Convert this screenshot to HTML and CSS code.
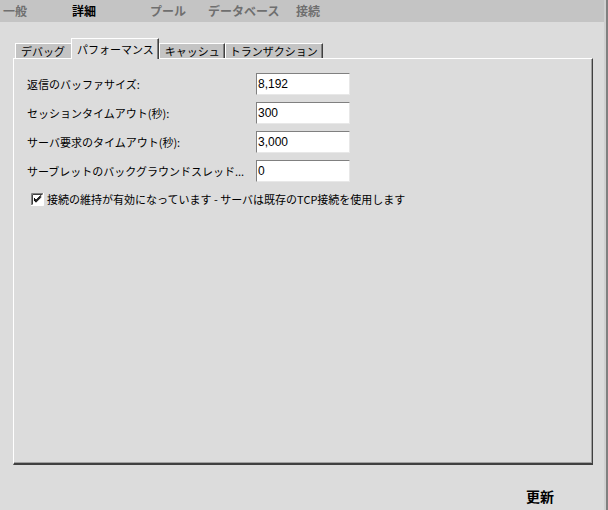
FILE: index.html
```html
<!DOCTYPE html>
<html lang="ja">
<head>
<meta charset="utf-8">
<link rel="stylesheet" href="styles.css">
</head>
<body>
<div class="window">
  <div class="main">
    <div class="topbar">
      <span class="top-item">一般</span>
      <span class="top-item active">詳細</span>
      <span class="top-item">プール</span>
      <span class="top-item">データベース</span>
      <span class="top-item">接続</span>
    </div>
    <div class="content">
      <div class="tabs">
        <div class="tab first">デバッグ</div>
        <div class="tab selected">パフォーマンス</div>
        <div class="tab">キャッシュ</div>
        <div class="tab last">トランザクション</div>
      </div>
      <div class="panel">
        <div class="form">
          <label class="label">返信のバッファサイズ:</label>
          <div class="input">8,192</div>
          <label class="label">セッションタイムアウト(秒):</label>
          <div class="input">300</div>
          <label class="label">サーバ要求のタイムアウト(秒):</label>
          <div class="input">3,000</div>
          <label class="label">サーブレットのバックグラウンドスレッド...</label>
          <div class="input">0</div>
        </div>
        <div class="check-row">
          <span class="checkbox">
            <svg width="13" height="13" viewBox="0 0 13 13">
              <rect x="0.5" y="0.5" width="12" height="12" fill="#fff" stroke="none"/>
              <path d="M0.5 12.5 V0.5 H12.5" fill="none" stroke="#808080"/>
              <path d="M1.5 11.5 V1.5 H11.5" fill="none" stroke="#404040"/>
              <path d="M12.5 0 V12.5 H0" fill="none" stroke="#ffffff"/>
              <path d="M3 6 L5 8.2 L10 3.2 M3 7 L5 9.2 L10 4.2 M3 5 L5 7.2 L10 2.2" fill="none" stroke="#000" stroke-width="1"/>
            </svg>
          </span>
          <span class="check-label">接続の維持が有効になっています - サーバは既存のTCP接続を使用します</span>
        </div>
      </div>
      <div class="footer">
        <span class="update">更新</span>
      </div>
    </div>
  </div>
  <div class="edge"></div>
</div>
</body>
</html>
```

FILE: styles.css
```css
html, body {
  margin: 0;
  padding: 0;
  background: #dcdcdc;
}

body {
  width: 608px;
  height: 510px;
  overflow: hidden;
  font-family: "Noto Sans CJK JP", "DejaVu Sans", sans-serif;
  font-size: 11px;
  color: #000;
}

.window {
  display: flex;
  width: 608px;
  height: 510px;
}

.main {
  flex: 1;
  display: flex;
  flex-direction: column;
}

.edge {
  width: 2px;
  border-left: 2px solid #d0d0d0;
  background: #808080;
}

.topbar {
  height: 22px;
  background: #c4c4c4;
  display: grid;
  grid-template-columns: 69px 78px 58px 88px auto;
  align-items: center;
  padding-left: 3px;
  font-size: 12px;
  font-weight: bold;
  color: #6f6f6f;
  line-height: 22px;
}

.top-item.active {
  color: #000;
}

.content {
  flex: 1;
  display: flex;
  flex-direction: column;
  padding: 16px 11px 0 13px;
}

.tabs {
  display: flex;
  align-items: flex-end;
  height: 21px;
  padding-left: 2px;
  margin-bottom: -1px;
  position: relative;
  z-index: 1;
}

.tab {
  height: 14px;
  line-height: 14px;
  padding: 0 4px 0 5px;
  background: #c4c4c4;
  border-top: 1px solid #ffffff;
  border-left: 1px solid #ffffff;
  border-right: 1px solid #404040;
  box-shadow: inset -1px 0 0 #808080;
  margin-bottom: 1px;
  white-space: nowrap;
}

.tab.first {
  border-right: none;
  box-shadow: none;
  padding-right: 6px;
}

.tab.last {
  padding-left: 4px;
}

.tab.selected {
  line-height: 20px;
  background: #dcdcdc;
  margin-bottom: 0;
  padding: 0 4px 2px 5px;
  height: 18px;
}

.panel {
  box-sizing: border-box;
  height: 407px;
  flex: none;
  background: #dcdcdc;
  border-top: 1px solid #ffffff;
  border-left: 1px solid #ffffff;
  border-right: 1px solid #404040;
  border-bottom: 2px solid #404040;
  box-shadow: inset -1px -1px 0 #a0a0a0;
  padding: 14px 0 0 13px;
}

.form {
  display: grid;
  grid-template-columns: 229px 94px;
  grid-auto-rows: 22px;
  row-gap: 7px;
  align-items: center;
}

.label {
  white-space: nowrap;
  line-height: 22px;
}

.input {
  box-sizing: border-box;
  height: 22px;
  background: #ffffff;
  border-top: 1px solid #808080;
  border-left: 1px solid #808080;
  border-right: 1px solid #e8e8e8;
  border-bottom: 1px solid #e8e8e8;
  font-family: "Liberation Sans", Arial, sans-serif;
  font-size: 12px;
  line-height: 20px;
  padding-left: 1px;
}

.check-row {
  display: flex;
  align-items: center;
  margin-top: 11px;
  padding-left: 4px;
  height: 13px;
}

.checkbox {
  width: 13px;
  height: 13px;
  display: block;
}

.checkbox svg {
  display: block;
}

.check-label {
  margin-left: 3px;
  white-space: nowrap;
  line-height: 13px;
}

.footer {
  flex: 1;
  display: flex;
  justify-content: flex-end;
  align-items: flex-start;
  padding-right: 39px;
  padding-top: 21px;
}

.update {
  font-size: 14px;
  font-weight: bold;
  line-height: 20px;
}
```
